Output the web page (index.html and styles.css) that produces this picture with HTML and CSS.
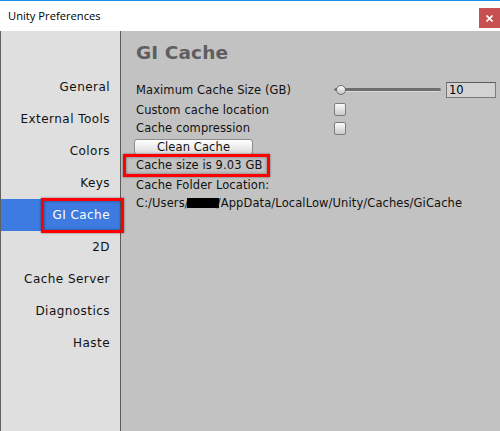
FILE: index.html
```html
<!DOCTYPE html>
<html lang="en">

<head>
    <meta charset="UTF-8">
    <meta name="viewport" content="width=device-width, initial-scale=1.0">
    <title>Unity Preferences</title>
    <link rel="stylesheet" href="styles.css">
</head>

<body>
    <div class="window">
        <div class="titlebar">
            <span class="title">Unity Preferences</span>
            <a href="#" class="close">
                <svg width="7" height="7" viewBox="0 0 7 7">
                    <path d="M0.5 0.5 L6.5 6.5 M6.5 0.5 L0.5 6.5" stroke="#fff" stroke-width="1.6" />
                </svg>
            </a>
        </div>
        <div class="main">
            <ul class="sidebar">
                <li class="sidebar-item">General</li>
                <li class="sidebar-item">External Tools</li>
                <li class="sidebar-item">Colors</li>
                <li class="sidebar-item">Keys</li>
                <li class="sidebar-item active">GI Cache<span class="mark mark-nav"></span></li>
                <li class="sidebar-item">2D</li>
                <li class="sidebar-item">Cache Server</li>
                <li class="sidebar-item">Diagnostics</li>
                <li class="sidebar-item">Haste</li>
            </ul>
            <div class="panel">
                <h1 class="panel-title">GI Cache</h1>

                <div class="field field-size">
                    <label>Maximum Cache Size (GB)</label>
                    <div class="slider">
                        <div class="slider-track"></div>
                        <div class="slider-thumb"></div>
                    </div>
                    <input class="number" type="text" value="10">
                </div>
                <div class="field field-check">
                    <label>Custom cache location</label>
                    <span class="checkbox"></span>
                </div>
                <div class="field field-check">
                    <label>Cache compression</label>
                    <span class="checkbox"></span>
                </div>

                <button class="btn">Clean Cache</button>

                <p class="info"><span class="marked">Cache size is 9.03 GB<span class="mark mark-size"></span></span></p>
                <p class="info">Cache Folder Location:</p>
                <p class="info path">C:/Users/<span class="redacted"></span>/AppData/LocalLow/Unity/Caches/GiCache</p>
            </div>
        </div>
    </div>
</body>

</html>
```

FILE: styles.css
```css
* {
    box-sizing: border-box;
    margin: 0;
    padding: 0;
}
body {
    background: #c2c2c2;
}
.window {
    width: 500px;
    height: 431px;
    display: flex;
    flex-direction: column;
    overflow: hidden;
}

/* title bar */
.titlebar {
    height: 31px;
    border-top: 1px solid #1a8ef0;
    background: #fff;
    display: flex;
    justify-content: space-between;
    align-items: flex-start;
    padding-left: 8px;
}
.title {
    font-family: "Open Sans", "Noto Sans", sans-serif;
    font-size: 11.2px;
    line-height: 30px;
    color: #000;
}
.close {
    margin-top: 7px;
    width: 21px;
    height: 20px;
    background: #c75050;
    display: flex;
    align-items: center;
    justify-content: center;
}
.close svg {
    display: block;
}

.main {
    flex: 1;
    display: flex;
    border-left: 1px solid #616161;
    font-family: "DejaVu Sans", sans-serif;
}

/* left nav */
.sidebar {
    list-style: none;
    width: 120px;
    background: #dfdfdf;
    border-right: 1px solid #5c5c5c;
    padding-top: 40px;
}
.sidebar-item {
    position: relative;
    height: 32px;
    line-height: 32px;
    text-align: right;
    padding-right: 10px;
    font-size: 12px;
    letter-spacing: 0.45px;
    color: #111;
}
.sidebar-item.active {
    background: #3d7be0;
    color: #fff;
}

/* red callout boxes */
.mark {
    position: absolute;
    border: 3px solid #f00;
    box-shadow: 0 0 2px rgba(0, 0, 0, .5), inset 0 0 3px rgba(0, 0, 0, .45);
}
.mark-nav {
    left: 40px;
    right: -4px;
    top: -1px;
    bottom: -2px;
}
.mark-size {
    left: -13px;
    right: -8px;
    top: -4px;
    bottom: -5px;
}

/* right panel */
.panel {
    flex: 1;
    background: #c2c2c2;
    padding: 11px 0 0 15px;
    font-size: 11.5px;
    letter-spacing: 0.1px;
    color: #111;
}
.panel-title {
    font-size: 18.5px;
    line-height: 22px;
    font-weight: bold;
    color: #5e5e5e;
    margin-bottom: 16px;
}
.field {
    display: flex;
    align-items: center;
    height: 19px;
}
.field-size {
    height: 20px;
}
.field label {
    width: 198px;
}
.slider {
    position: relative;
    width: 107px;
    height: 12px;
    display: flex;
    align-items: center;
}
.slider-track {
    width: 100%;
    height: 4px;
    background: #6d6d6d;
    border-bottom: 1px solid #dadada;
    border-radius: 2px;
}
.slider-thumb {
    position: absolute;
    left: 2px;
    top: 1px;
    width: 10px;
    height: 10px;
    border-radius: 50%;
    border: 1px solid #707070;
    background: linear-gradient(#fafafa, #c4c4c4);
}
.number {
    margin-left: 5px;
    width: 50px;
    height: 16px;
    border: 1px solid #7a7a7a;
    border-top-color: #5e5e5e;
    background: #d2d2d2;
    font-family: "DejaVu Sans", sans-serif;
    font-size: 11.5px;
    padding-left: 2px;
    color: #000;
}
.checkbox {
    display: block;
    width: 12px;
    height: 13px;
    border: 1px solid #7c7c7c;
    border-radius: 2px;
    background: linear-gradient(#fbfbfb, #c9c9c9);
}
.field-check + .field-check {
    height: 18px;
}

.btn {
    display: block;
    margin: 2px 0 0 -2px;
    width: 119px;
    height: 16px;
    border: 1px solid #8d8d8d;
    border-radius: 3px;
    background: linear-gradient(#ffffff, #dcdcdc);
    font-family: "DejaVu Sans", sans-serif;
    font-size: 11.5px;
    line-height: 13px;
    letter-spacing: 0.1px;
    color: #111;
}

.info {
    height: 20px;
    line-height: 20px;
}
.marked {
    position: relative;
}
.path {
    height: 16px;
    line-height: 16px;
}
.redacted {
    display: inline-block;
    width: 32px;
    height: 10px;
    background: #000;
    margin: 0 -2px;
    vertical-align: -1px;
}
```
